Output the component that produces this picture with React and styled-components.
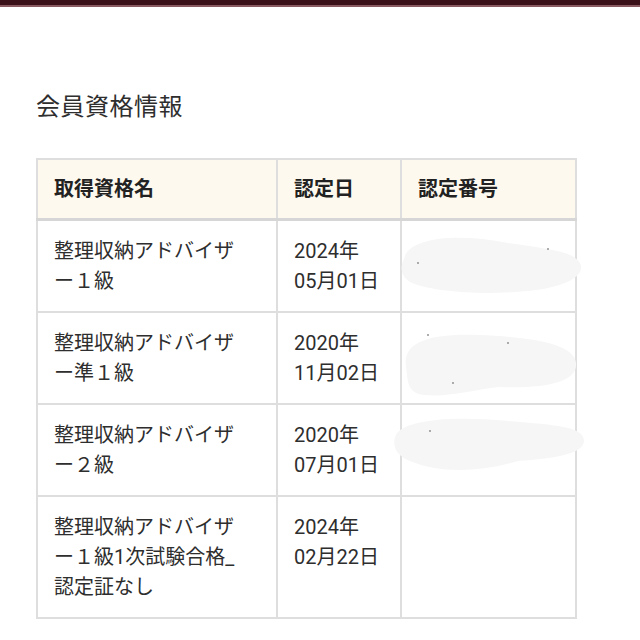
import React from "react";
import styled, { createGlobalStyle } from "styled-components";

const Global = createGlobalStyle`
  html, body { margin: 0; padding: 0; background: #fff; }
  body { font-family: Roboto, "Noto Sans CJK JP", sans-serif; color: #333; }
`;

const TopBar = styled.div`
  height: 5px;
  background: #3a1119;
  border-bottom: 2px solid #8a5a62;
`;

const Page = styled.main`
  padding: 84px 0 0 36px;
`;

const Title = styled.h1`
  margin: 0 0 35px;
  font-size: 24px;
  line-height: 32px;
  font-weight: 400;
  color: #2e2e2e;
  letter-spacing: 0.5px;
`;

const Table = styled.table`
  border-collapse: collapse;
  table-layout: fixed;
  width: 539px;
  border: 2px solid #dedede;
`;

const HeadCell = styled.th`
  background: #fdf9ef;
  border: 2px solid #dedede;
  border-bottom: 3px solid #d6d6d6;
  padding: 14px 16px;
  font-size: 20px;
  line-height: 30px;
  font-weight: 700;
  color: #222;
  text-align: left;
`;

const Cell = styled.td`
  position: relative;
  border: 2px solid #dedede;
  padding: 15px ${(p) => (p.$wide ? "28px" : "16px")} 15px 16px;
  font-size: 20px;
  line-height: 30px;
  color: #2e2e2e;
  vertical-align: top;
  word-break: normal;
  line-break: loose;
`;

const Line = styled.span`
  display: block;
`;

const Smudge = styled.svg`
  position: absolute;
  left: -4px;
  top: 0;
  width: 190px;
  height: 90px;
  overflow: visible;
  pointer-events: none;
`;

const blobs = [
  "M6 30 C 10 8, 60 4, 110 14 C 150 20, 175 22, 182 34 C 188 46, 170 58, 130 62 C 90 66, 40 64, 14 54 C 2 48, 2 38, 6 30 Z",
  "M8 44 C 4 20, 30 10, 80 12 C 130 14, 176 20, 178 40 C 180 58, 150 66, 100 64 C 70 68, 50 74, 26 72 C 8 70, 10 56, 8 44 Z",
  "M-2 24 C 4 10, 50 4, 110 10 C 160 14, 186 16, 186 30 C 186 44, 150 48, 120 50 C 80 62, 40 62, 12 50 C -4 44, -6 32, -2 24 Z",
];

const dots = [
  [[20, 34], [150, 20]],
  [[30, 12], [110, 20], [55, 60]],
  [[32, 20]],
];

const rows = [
  { name: "整理収納アドバイザー１級", year: "2024年", day: "05月01日", blob: 0, top: 8 },
  { name: "整理収納アドバイザー準１級", year: "2020年", day: "11月02日", blob: 1, top: 10 },
  { name: "整理収納アドバイザー２級", year: "2020年", day: "07月01日", blob: 2, top: 6 },
  { name: "整理収納アドバイザー１級1次試験合格_認定証なし", year: "2024年", day: "02月22日", blob: null },
];

export default function App() {
  return (
    <>
      <Global />
      <TopBar />
      <Page>
        <Title>会員資格情報</Title>
        <Table>
          <colgroup>
            <col style={{ width: 240 }} />
            <col style={{ width: 124 }} />
            <col style={{ width: 175 }} />
          </colgroup>
          <thead>
            <tr>
              <HeadCell>取得資格名</HeadCell>
              <HeadCell>認定日</HeadCell>
              <HeadCell>認定番号</HeadCell>
            </tr>
          </thead>
          <tbody>
            {rows.map((r, i) => (
              <tr key={i}>
                <Cell $wide>{r.name}</Cell>
                <Cell>
                  <Line>{r.year}</Line>
                  <Line>{r.day}</Line>
                </Cell>
                <Cell>
                  {r.blob !== null && (
                    <Smudge viewBox="0 0 190 90" style={{ top: r.top }}>
                      <path d={blobs[r.blob]} fill="#f6f6f6" />
                      {dots[r.blob].map(([x, y], j) => (
                        <circle key={j} cx={x} cy={y} r="0.9" fill="#888" />
                      ))}
                    </Smudge>
                  )}
                </Cell>
              </tr>
            ))}
          </tbody>
        </Table>
      </Page>
    </>
  );
}
